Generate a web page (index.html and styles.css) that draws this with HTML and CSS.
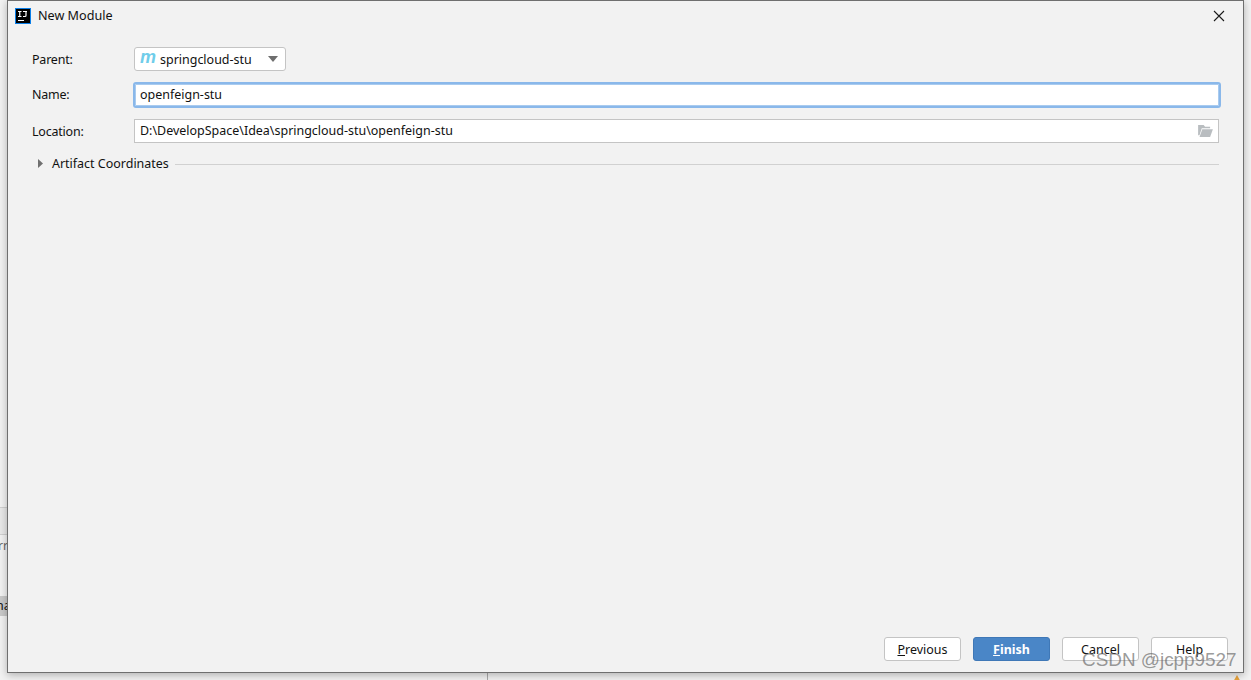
FILE: index.html
```html
<!DOCTYPE html>
<html lang="en">
<head>
<meta charset="utf-8">
<title>New Module</title>
<link rel="stylesheet" href="styles.css">
</head>
<body>
<div class="backdrop">
  <div class="bg-band"></div>
  <div class="bg-text">rr</div>
  <div class="bg-tab">na</div>
  <div class="bg-divider"></div>
  <svg class="bg-warn" width="8" height="8" viewBox="0 0 8 8"><path d="M4 1 8 8H0z" fill="#e8a33d"/></svg>
</div>
<main class="dialog">
  <header class="titlebar">
    <svg class="app-icon" width="16" height="16" viewBox="0 0 16 16">
      <rect x="0.5" y="0.5" width="15" height="15" fill="#000" stroke="#0b7fe8"/>
      <rect x="3" y="12" width="6" height="1" fill="#fff"/>
      <path d="M3 3.5h3.5M4.75 3.5v5M3 8.5h3.5M8 3.5h4M11 3.5v4q0 1-1 1H8" fill="none" stroke="#fff" stroke-width="1.2"/>
    </svg>
    <span class="title">New Module</span>
    <svg class="close" width="12" height="12" viewBox="0 0 12 12"><path d="M1 1 11 11M11 1 1 11" stroke="#1a1a1a" stroke-width="1.1"/></svg>
  </header>
  <section class="form">
    <div class="row row-parent">
      <label class="label">Parent:</label>
      <div class="select">
        <span class="maven">m</span>
        <span class="select-text">springcloud-stu</span>
        <svg class="caret" width="10" height="6" viewBox="0 0 10 6"><path d="M0 0h10L5 6z" fill="#6e6e6e"/></svg>
      </div>
    </div>
    <div class="row row-name">
      <label class="label label-raised">Name:</label>
      <div class="input input-focus">openfeign-stu</div>
    </div>
    <div class="row row-location">
      <label class="label">Location:</label>
      <div class="input input-plain">
        <span class="path-text">D:\DevelopSpace\Idea\springcloud-stu\openfeign-stu</span>
        <svg class="folder" width="15" height="12" viewBox="0 0 16 13">
          <path d="M0 0h6l1.5 2H13v1.5H4L1.5 11H0z" fill="#b9bdc0"/>
          <path d="M4.5 4.5H16L13 13H1.5z" fill="#b9bdc0"/>
        </svg>
      </div>
    </div>
    <div class="artifact">
      <svg class="tri" width="5" height="9" viewBox="0 0 5 9"><path d="M0 0 5 4.5 0 9z" fill="#707070"/></svg>
      <span class="artifact-text">Artifact Coordinates</span>
      <span class="rule"></span>
    </div>
  </section>
  <footer class="buttons">
    <button class="btn"><u>P</u>revious</button>
    <button class="btn btn-primary"><u>F</u>inish</button>
    <button class="btn">Cancel</button>
    <button class="btn">Help</button>
  </footer>
</main>
<div class="watermark">CSDN @jcpp9527</div>
</body>
</html>
```
FILE: styles.css
```css
* { box-sizing: border-box; }
html, body { margin: 0; height: 100%; }
body {
  position: relative;
  width: 1251px;
  height: 680px;
  overflow: hidden;
  background: #f2f2f2;
  font-family: "Noto Sans", "Open Sans", sans-serif;
  font-size: 12.48px;
  color: #111;
}
.backdrop { position: absolute; inset: 0; }
.bg-band { position: absolute; left: 0; top: 507px; width: 8px; height: 28px; background: #e9e9e9; border-top: 1px solid #d0d0d0; border-bottom: 1px solid #d0d0d0; }
.bg-text { position: absolute; left: -2px; top: 538px; width: 10px; overflow: hidden; color: #666; font-size: 12px; line-height: 16px; }
.bg-tab { position: absolute; left: 0; top: 596px; width: 8px; height: 20px; overflow: hidden; background: #c9c9c9; line-height: 20px; text-indent: -4px; }
.bg-divider { position: absolute; left: 487px; top: 672px; width: 1px; height: 8px; background: #aaa; }
.bg-warn { position: absolute; left: 1233px; top: 674px; }
.dialog {
  position: absolute;
  left: 7px;
  top: 0;
  width: 1237px;
  height: 673px;
  display: flex;
  flex-direction: column;
  background: #f2f2f2;
  border: 1px solid #6f6f6f;
  box-shadow: 0 2px 8px rgba(0,0,0,.28);
}
.titlebar { display: flex; align-items: center; height: 29px; flex: none; padding: 0 18px 0 7px; }
.app-icon { flex: none; }
.title { margin-left: 7px; font-size: 12.6px; }
.close { margin-left: auto; }
.form { flex: 1; padding: 17px 24px 0 24px; display: flex; flex-direction: column; }
.row { display: flex; align-items: center; }
.label { width: 102px; flex: none; letter-spacing: -0.2px; }
.label-raised { margin-bottom: 2px; }
.select {
  width: 152px; height: 24px;
  display: flex; align-items: center;
  background: #fff;
  border: 1px solid #c4c4c4;
  border-radius: 3px;
  padding: 0 5px;
}
.maven { width: 20px; font-family: "Liberation Sans", sans-serif; font-size: 18px; line-height: 18px; font-weight: 700; font-style: italic; color: #6fcdea; transform: translateY(-2px); }
.select-text { flex: 1; }
.caret { flex: none; margin-right: 1px; transform: translate(-1px, 0); }
.row-name { margin-top: 11px; }
.row-location { margin-top: 11px; }
.input { display: flex; align-items: center; flex: 1; background: #fff; padding: 0 5px; }
.input-focus { height: 26px; margin-left: -1px; margin-right: -2px; padding-left: 5px; padding-bottom: 2px; border: 2px solid #8ab8ea; border-radius: 3px; box-shadow: inset 0 0 0 1px #a9cbef; }
.input-plain { height: 24px; border: 1px solid #c4c4c4; justify-content: space-between; padding-right: 5px; }
.path-text { margin-bottom: 2px; }
.folder { flex: none; }
.artifact { display: flex; align-items: center; margin-top: 12px; height: 18px; padding-left: 6px; }
.tri { flex: none; transform: translateY(-1px); }
.artifact-text { margin-left: 9px; margin-bottom: 2px; }
.rule { flex: 1; height: 1px; margin-left: 6px; background: #d1d1d1; }
.buttons { display: flex; justify-content: flex-end; gap: 12px; flex: none; padding: 0 15px 11px 0; }
.btn {
  width: 77px; height: 24px;
  padding: 2px 0 0;
  font: inherit;
  line-height: 20px;
  color: #111;
  background: #fff;
  border: 1px solid #c4c4c4;
  border-radius: 3px;
}
.btn-primary { background: #4a86c7; border-color: #3f78b7; color: #fff; font-weight: 700; }
.watermark {
  position: absolute;
  left: 1082px;
  top: 648px;
  font-family: "Liberation Sans", sans-serif;
  font-size: 18.9px;
  line-height: 24px;
  color: rgba(90, 90, 90, .62);
  white-space: nowrap;
}
```
